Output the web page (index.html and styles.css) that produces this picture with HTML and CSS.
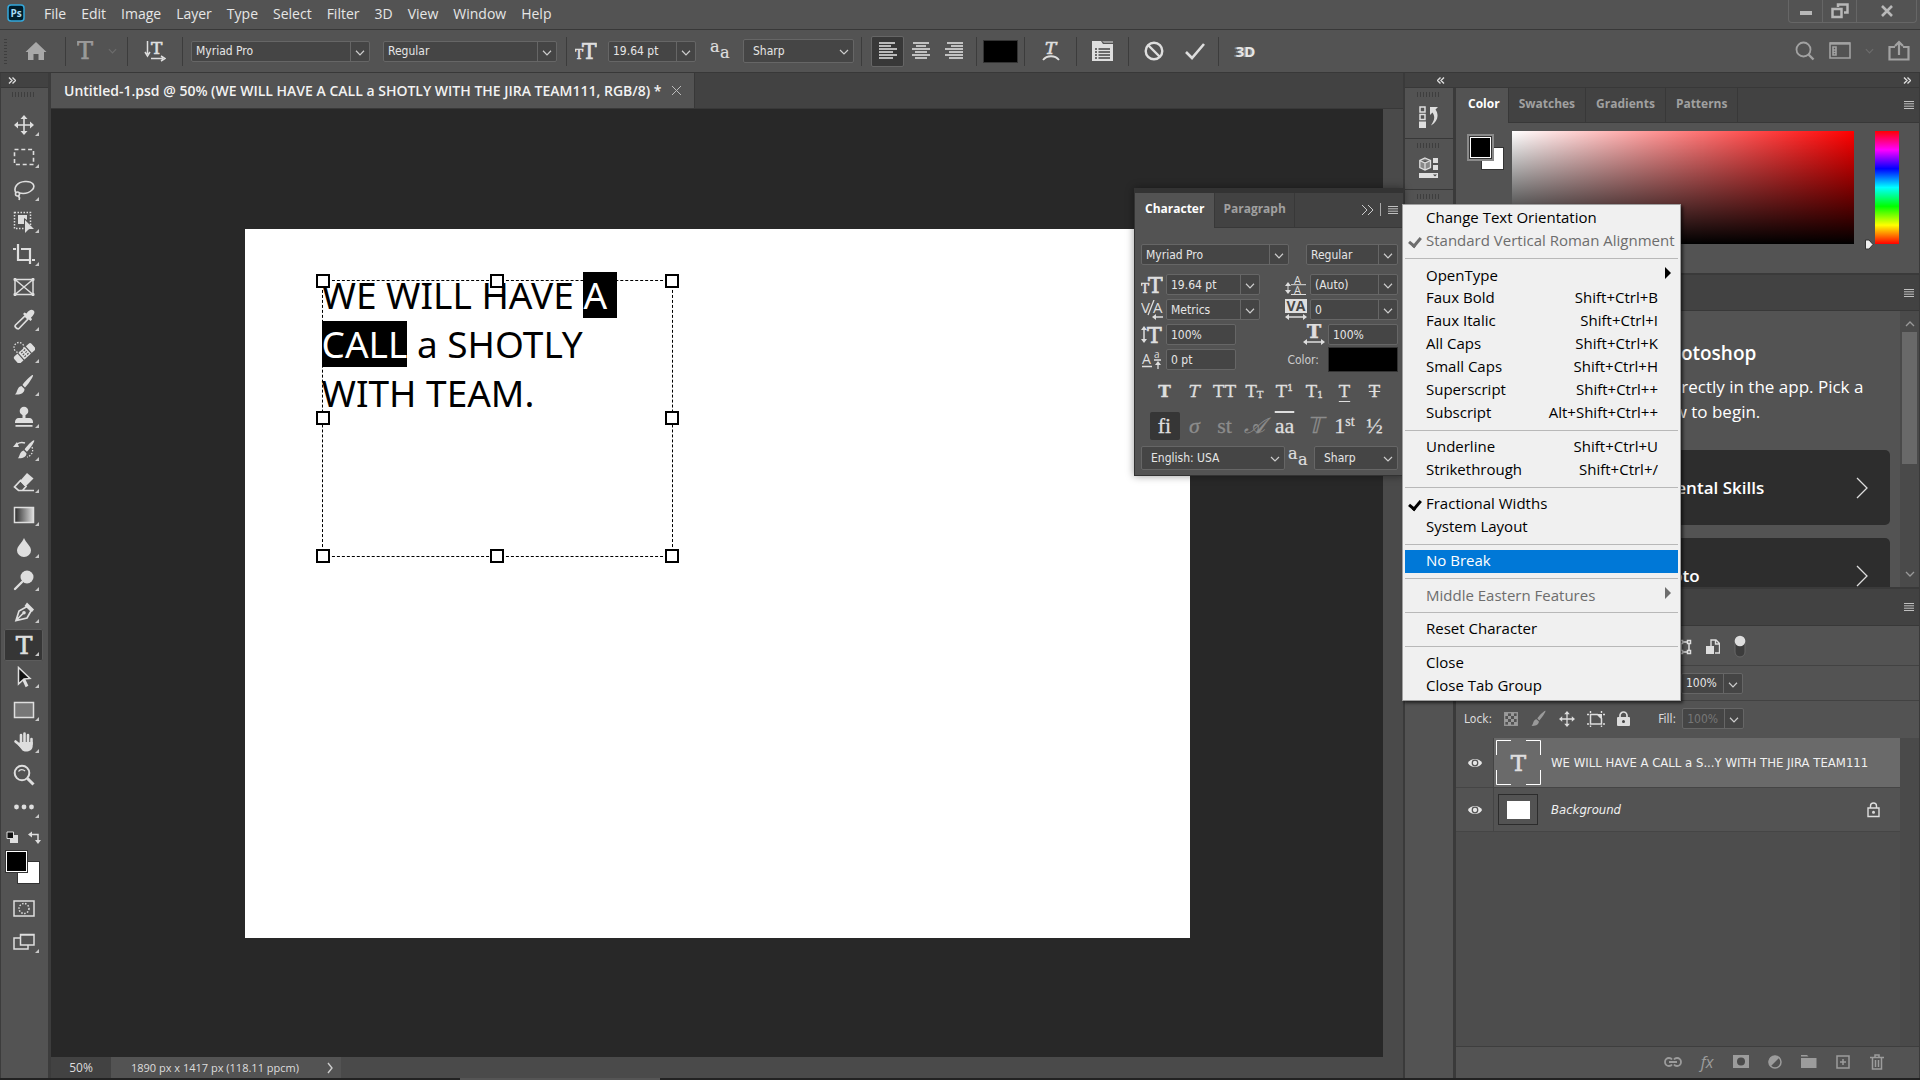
FILE: index.html
```html
<!DOCTYPE html>
<html lang="en">
<head>
    <meta charset="UTF-8">
    <meta name="viewport" content="width=device-width, initial-scale=1.0">
    <title>Untitled-1.psd</title>
    <link rel="stylesheet" href="styles.css">
</head>
<body>

    <!-- shared icons -->
    <svg class="sprite" aria-hidden="true">
        <symbol id="burger" viewBox="0 0 10 8"><path d="M0 .5h10M0 2.8h10M0 5.2h10M0 7.5h10" stroke="currentColor"/></symbol>
        <symbol id="chev" viewBox="0 0 10 6"><path d="M1 1l4 4 4-4" fill="none" stroke="currentColor" stroke-width="1.3"/></symbol>
        <symbol id="eye" viewBox="0 0 18 12"><path d="M1 6c3-6 13-6 16 0-3 6-13 6-16 0z" fill="currentColor"/><circle cx="9" cy="6" r="3.8" fill="#535353"/><circle cx="9" cy="6" r="2.4" fill="currentColor"/></symbol>
        <symbol id="brush" viewBox="0 0 22 22"><path d="M20 1c1 1-6 11-8 12.500l-2.500-2.500C11 8 19 0 20 1zM8.500 12l3 3c0 4-4 6-9.500 5.500 2.500-2 2-8 6.500-8.500z" fill="currentColor"/></symbol>
        <symbol id="move" viewBox="0 0 20 20"><path d="M10 2v16M2 10h16" stroke="currentColor" stroke-width="1.600"/><path d="M10 0l3.500 4h-7zM10 20l3.500-4h-7zM0 10l4-3.500v7zM20 10l-4-3.500v7z" fill="currentColor"/></symbol>
    </svg>

    <header class="menubar">
        <svg class="logo" viewBox="0 0 18 18"><rect x="1" y="1" width="16" height="16" rx="3" fill="#001d2b" stroke="#33a8dc" stroke-width="1.500"/><text x="9" y="13" text-anchor="middle" class="logo-text">Ps</text></svg>
        <nav class="menus">
            <a href="#">File</a><a href="#">Edit</a><a href="#">Image</a><a href="#">Layer</a><a href="#">Type</a><a href="#">Select</a><a href="#">Filter</a><a href="#">3D</a><a href="#">View</a><a href="#">Window</a><a href="#">Help</a>
        </nav>
        <div class="window-buttons">
            <button aria-label="Minimize"><svg width="14" height="12"><rect x="1" y="6" width="12" height="4" fill="#b8b8b8"/></svg></button>
            <button aria-label="Restore"><svg width="18" height="16" fill="none" stroke="#b8b8b8" stroke-width="2.500"><path d="M7 4V1.500h9.500v8H13"/><path d="M1.500 6h9v8h-9z"/></svg></button>
            <button class="wide" aria-label="Close"><svg width="14" height="12" stroke="#b8b8b8" stroke-width="2.600"><path d="M2 1l10 10M12 1L2 11"/></svg></button>
        </div>
    </header>

    <div class="options">
        <i class="grip-v"></i>
        <button class="opt home" aria-label="Home"><svg width="22" height="20" fill="#a8a8a8"><path d="M11 1l10.500 10H19v8h-5.500v-6h-5v6H3v-8H.5z"/></svg></button>
        <i class="sep"></i>
        <button class="opt preset" aria-label="Type tool preset"><svg width="18" height="20" class="glyph dim"><text x="0" y="18" font-size="24">T</text></svg><svg width="9" height="6" class="faint"><use href="#chev"/></svg></button>
        <i class="sep"></i>
        <button class="opt orient" aria-label="Text orientation"><svg width="22" height="22" class="glyph"><text x="7" y="14" font-size="17">T</text><path d="M3.500 1v13M1 12l2.500 4 2.500-4M7 18.500h12M17 16l4 2.500-4 2.500" fill="none" stroke="currentColor" stroke-width="1.500"/></svg></button>
        <i class="sep"></i>
        <select class="field opt-family" aria-label="Font family"><option>Myriad Pro</option></select>
        <select class="field opt-style" aria-label="Font style"><option>Regular</option></select>
        <i class="sep"></i>
        <label class="opt size" for="opt-size"><svg width="22" height="20" class="glyph"><text x="0" y="18" font-size="12">T</text><text x="7" y="18" font-size="22">T</text></svg></label>
        <select class="field opt-size" id="opt-size" aria-label="Font size"><option>19.64 pt</option></select>
        <label class="opt aa" for="opt-aa"><svg width="20" height="20" class="glyph thin"><text x="0" y="11" font-size="16">a</text><text x="10" y="17" font-size="16">a</text></svg></label>
        <select class="field plain opt-aa" id="opt-aa" aria-label="Anti-aliasing"><option>Sharp</option></select>
        <i class="sep"></i>
        <div class="aligns">
            <button class="active" aria-label="Align left"><svg width="18" height="18"><path d="M0 1h16M0 4h12M0 7h18M0 10h14M0 13h18M0 16h14" stroke="currentColor" stroke-width="1.500"/></svg></button>
            <button aria-label="Align center"><svg width="18" height="18"><path d="M1 1h16M4 4h10M0 7h18M3 10h12M0 13h18M3 16h12" stroke="currentColor" stroke-width="1.500"/></svg></button>
            <button aria-label="Align right"><svg width="18" height="18"><path d="M2 1h16M6 4h12M0 7h18M4 10h14M0 13h18M4 16h14" stroke="currentColor" stroke-width="1.500"/></svg></button>
        </div>
        <i class="sep"></i>
        <button class="swatch" aria-label="Text color"></button>
        <i class="sep"></i>
        <button class="opt b50" aria-label="Warp text"><svg width="18" height="22" class="glyph"><text x="3" y="14" font-size="17" font-style="italic">T</text><path d="M1 20c4-5 12-5 16 0" fill="none" stroke="currentColor" stroke-width="1.800"/></svg></button>
        <i class="sep"></i>
        <button class="opt b50" aria-label="Toggle panels"><svg width="22" height="22"><path d="M0 1h9l2 3h10v17H0z" fill="#dedede"/><path d="M10 1h11v2H12z" fill="#999"/><path d="M3 9h2M6.500 9H18M3 12h2M6.500 12H18M3 15h2M6.500 15H18M3 18h2M6.500 18H18" stroke="#444" stroke-width="1.300"/></svg></button>
        <i class="sep"></i>
        <div class="commit">
            <button aria-label="Cancel"><svg width="20" height="20" fill="none" stroke="#dedede" stroke-width="2.400"><circle cx="10" cy="10" r="8.300"/><path d="M4 4l12 12"/></svg></button>
            <button aria-label="Commit"><svg width="20" height="18" fill="none" stroke="#dedede" stroke-width="2.600"><path d="M1 10l6 6L19 2"/></svg></button>
        </div>
        <i class="sep"></i>
        <button class="opt three-d">3D</button>
        <div class="options-right">
            <button aria-label="Search"><svg width="20" height="20" fill="none" stroke="#a2a2a2" stroke-width="1.800"><circle cx="8.500" cy="8.500" r="7"/><path d="M13.500 13.500l5 5" stroke-width="2.400"/></svg></button>
            <button aria-label="Workspace"><svg width="22" height="18" fill="none" stroke="#a2a2a2" stroke-width="1.600"><path d="M1 1h20v15H1zM4 5h3v8H4zM4 8h3M4 10.500h3"/><path d="M1 1.500h20" stroke-width="2.400"/></svg></button>
            <svg width="9" height="6" class="faint"><use href="#chev"/></svg>
            <button aria-label="Share"><svg width="22" height="22" fill="none" stroke="#a2a2a2" stroke-width="2.200"><path d="M7 7H1.500v12.500h19V7H15M11 15V3M7 6l4-4 4 4"/></svg></button>
        </div>
    </div>

    <main class="workspace">
        <aside class="toolbar">
            <div class="strip"><svg width="8" height="7"><path d="M1 .5l3 3-3 3M4.500 .5l3 3-3 3"/></svg></div>
            <i class="grip"></i>
            <div class="tools">
                <button class="tool sub" aria-label="Move"><svg viewBox="0 0 22 22"><use href="#move" x="1" y="1" width="20" height="20"/></svg></button>
                <button class="tool sub" aria-label="Marquee"><svg viewBox="0 0 22 22"><rect x="1.500" y="3.500" width="19" height="15" fill="none" stroke="currentColor" stroke-width="1.600" stroke-dasharray="4 2.800"/></svg></button>
                <button class="tool sub" aria-label="Lasso"><svg viewBox="0 0 22 22" fill="none" stroke="currentColor" stroke-width="1.600"><path d="M3 14C0 9 4 3 12 2.500c8-.5 11 4.500 7 8.500-3 3-8 4-13 3"/><circle cx="4.500" cy="15" r="2"/><path d="M5 17c2 1 2 2 1 4"/></svg></button>
                <button class="tool sub" aria-label="Object selection"><svg viewBox="0 0 22 22"><rect x="1.500" y="1.500" width="16" height="16" fill="none" stroke="currentColor" stroke-width="1.500" stroke-dasharray="1.500 1.500"/><path d="M5 4h9v5l-3-2v6H5z" fill="currentColor"/><path d="M12 9l9 9h-5l-4 4z" fill="currentColor"/></svg></button>
                <button class="tool sub" aria-label="Crop"><svg viewBox="0 0 22 22" fill="none" stroke="currentColor" stroke-width="2.200"><path d="M0 5h3M5 0v16h12M8 5h9v15M19 16h3"/></svg></button>
                <button class="tool" aria-label="Frame"><svg viewBox="0 0 22 22" fill="none" stroke="currentColor" stroke-width="1.500"><path d="M2 3.500h18v15H2zM2 3.500l18 15M20 3.500l-18 15"/><path d="M1 2.500h2v2H1zM19 2.500h2v2h-2zM1 17.500h2v2H1zM19 17.500h2v2h-2z" fill="currentColor" stroke-width="1"/></svg></button>
                <button class="tool sub" aria-label="Eyedropper"><svg viewBox="0 0 22 22"><path d="M12 7l3 3L6 19.500c-1.500 1.500-5-2-3.500-3.500z" fill="none" stroke="currentColor" stroke-width="1.700"/><path d="M10 5l1.500-1.500 2 1C16 1 18.500 0 20.500 1.500S21 6 18 8.500l1 2L17.500 12z" fill="currentColor"/></svg></button>
                <button class="tool sub" aria-label="Healing brush"><svg viewBox="0 0 22 22"><circle cx="6" cy="6.500" r="5" fill="none" stroke="currentColor" stroke-width="1.300" stroke-dasharray="1.500 1.500"/><g transform="rotate(-42 12 12)"><rect x="0" y="7.500" width="23" height="9" rx="2" fill="currentColor"/><path d="M6.500 7v10M16.500 7v10M9 9.500h2M12.500 9.500h2M9 12h2M12.500 12h2M9 14.500h2M12.500 14.500h2" stroke="#535353" stroke-width="1.200"/></g></svg></button>
                <button class="tool sub" aria-label="Brush"><svg viewBox="0 0 22 22"><use href="#brush" width="22" height="22"/></svg></button>
                <button class="tool sub" aria-label="Clone stamp"><svg viewBox="0 0 22 22" fill="currentColor"><circle cx="11" cy="5" r="4.300"/><path d="M9.500 8h3v4h4c2 0 3.500 2 3.500 4v1H2v-1c0-2 1.500-4 3.500-4h4zM2.500 19h17v1.800h-17z"/></svg></button>
                <button class="tool sub" aria-label="History brush"><svg viewBox="0 0 22 22"><use href="#brush" x="3" width="20" height="21"/><path d="M0 8l4-5 2 5z" fill="currentColor"/><path d="M4 5c3-2 5-2 8-1" fill="none" stroke="currentColor" stroke-width="1.500"/><path d="M19 8c2 5-1 9-5 10" fill="none" stroke="currentColor" stroke-width="1.300" stroke-dasharray="1.500 1.500"/></svg></button>
                <button class="tool sub" aria-label="Eraser"><svg viewBox="0 0 22 22"><path d="M7 10l7-8 6.500 5.500-8 8z" fill="currentColor"/><path d="M7.500 9.500l5.500 6-3.500 4h-4L1.500 16zM9 19.500h12" fill="none" stroke="currentColor" stroke-width="1.700"/></svg></button>
                <button class="tool sub" aria-label="Gradient"><svg viewBox="0 0 22 22"><defs><linearGradient id="gr"><stop offset="0" stop-color="#2a2a2a"/><stop offset="1" stop-color="#ddd"/></linearGradient></defs><rect x="1.500" y="3.500" width="19" height="15" fill="url(#gr)" stroke="#dedede" stroke-width="1.500"/></svg></button>
                <button class="tool sub" aria-label="Blur"><svg viewBox="0 0 22 22"><path d="M11 2c2 5 7 8 7 12.500a7 6.500 0 0 1-14 0C4 10 9 7 11 2z" fill="currentColor"/></svg></button>
                <button class="tool sub" aria-label="Dodge"><svg viewBox="0 0 22 22"><circle cx="14" cy="8" r="6.500" fill="currentColor"/><path d="M9 13l-7 7" stroke="currentColor" stroke-width="2.400" stroke-linecap="round"/></svg></button>
                <button class="tool sub" aria-label="Pen"><svg viewBox="0 0 22 22"><path d="M3 19.500L6 10l8-4.500L18 10l-4 7zM3 19.500l7-7" fill="none" stroke="currentColor" stroke-width="1.700"/><circle cx="11" cy="11.800" r="1.800" fill="currentColor"/><path d="M14 1.500l7 7-2 2.500-7.500-6z" fill="currentColor"/></svg></button>
                <button class="tool sub active" aria-label="Type"><svg viewBox="0 0 22 22" class="glyph"><text x="11" y="20" font-size="25" text-anchor="middle">T</text></svg></button>
                <button class="tool sub" aria-label="Path selection"><svg viewBox="0 0 22 22"><path d="M10.500 13l3.500 7.500" stroke="#dedede" stroke-width="3"/><path d="M5.500 1.500l11.500 11-6 .5-5.500 5z" fill="#111" stroke="#dedede" stroke-width="1.500"/></svg></button>
                <button class="tool sub" aria-label="Rectangle"><svg viewBox="0 0 22 22"><rect x="1.500" y="3.500" width="19" height="15" fill="#777" stroke="#dedede" stroke-width="1.500"/></svg></button>
                <button class="tool sub" aria-label="Hand"><svg viewBox="0 0 22 22" fill="none" stroke="currentColor" stroke-linecap="round"><path d="M8 12V4M11.500 11V2.500M15 12V4M18.500 13V8M8 15l-5.500-4.500" stroke-width="2.600"/><path d="M7 11h12.700v4c0 6-9 7-11 3.500L5 14z" fill="currentColor" stroke="none"/></svg></button>
                <button class="tool" aria-label="Zoom"><svg viewBox="0 0 22 22" fill="none" stroke="currentColor"><circle cx="9" cy="9" r="7.300" stroke-width="2"/><path d="M5.500 7.500c1.500-2.500 4.500-2.500 6.500-.5" stroke-width="1.300"/><path d="M14.500 14.500l6 6" stroke-width="3"/></svg></button>
                <button class="tool sub" aria-label="Edit toolbar"><svg viewBox="0 0 22 22" fill="currentColor"><circle cx="3.500" cy="11" r="2.400"/><circle cx="11" cy="11" r="2.400"/><circle cx="18.500" cy="11" r="2.400"/></svg></button>
            </div>
            <div class="mini">
                <button aria-label="Default colors"><svg width="13" height="13"><path d="M4 4h8v8H4z" fill="#dedede"/><path d="M1 1h6.500v6.500H1z" fill="#111" stroke="#dedede"/></svg></button>
                <button aria-label="Switch colors"><svg width="13" height="13" fill="none" stroke="#dedede" stroke-width="1.500"><path d="M3 3.500h7V11"/><path d="M4 .5v6l-4-3zM7 9h6l-3 4z" fill="#dedede" stroke="none"/></svg></button>
            </div>
            <div class="fg-bg"><button class="fg" aria-label="Foreground"></button><button class="bg" aria-label="Background"></button></div>
            <button class="tool" aria-label="Quick mask"><svg viewBox="0 0 22 22" fill="none" stroke="currentColor"><rect x="1" y="3" width="20" height="15" stroke-width="1.500"/><circle cx="11" cy="10.500" r="5" stroke-width="1.500" stroke-dasharray="1.500 1.500"/></svg></button>
            <button class="tool sub" aria-label="Screen mode"><svg viewBox="0 0 22 22" fill="none" stroke="currentColor" stroke-width="1.500"><path d="M7 7H1v11h14v-4M7.500 3.500H21V14H7.500zM7.500 4H21"/></svg></button>
        </aside>

        <section class="document">
            <div class="doc-tabs">
                <div class="doc-tab">Untitled-1.psd @ 50% (WE WILL HAVE A CALL a SHOTLY WITH THE JIRA TEAM111, RGB/8) *
                    <button aria-label="Close document"><svg width="9" height="9" stroke="#bbb"><path d="M0 0l9 9M9 0L0 9"/></svg></button></div>
            </div>
            <div class="stage">
                <div class="canvas">
                    <div class="artboard">
                        <p class="copy">WE WILL HAVE <mark>A </mark><br><mark>CALL</mark> a SHOTLY<br>WITH TEAM.</p>
                        <div class="frame"><i></i><i></i><i></i><i></i><i></i><i></i><i></i><i></i></div>
                    </div>
                </div>
                <div class="v-scroll"></div>
            </div>
            <footer class="status">
                <span class="zoom">50%</span>
                <span class="dims">1890 px x 1417 px (118.11 ppcm)</span>
                <button aria-label="Status options"><svg width="6" height="12" fill="none" stroke="#ccc" stroke-width="1.400"><path d="M1 1l4 5-4 5"/></svg></button>
            </footer>
        </section>

        <aside class="dock">
            <div class="strip"><svg width="8" height="7"><path d="M3.500 .5l-3 3 3 3M7 .5l-3 3 3 3"/></svg></div>
            <div class="dock-item"><i class="grip"></i><button aria-label="History"><svg width="20" height="22"><path d="M1 1h5v5H1zM1 8.500h5v5H1z" fill="none" stroke="#dedede" stroke-width="1.500"/><path d="M0 15.500h7V22H0z" fill="#dedede"/><path d="M11 1h8l-2.500 2.500c4 6 2 12-4.500 16 4-6 4-9 1.500-13L11 9z" fill="#dedede"/></svg></button></div>
            <div class="dock-item"><i class="grip"></i><button aria-label="Libraries"><svg width="20" height="22"><path d="M6 1l5.500 2.500v7L6 13 .8 10.500v-7zM.8 3.500L6 6l5.500-2.500M6 6v7" fill="#888" stroke="#dedede" stroke-width="1.300"/><path d="M14 1h5v5h-5zM14 8h5v5h-5zM0 16h19v5H0z" fill="#dedede"/><path d="M14 17.500h4l-2 2z" fill="#444"/></svg></button></div>
            <div class="dock-item rest"><i class="grip"></i></div>
        </aside>

        <aside class="panels">
            <div class="strip"><svg width="8" height="7"><path d="M1 .5l3 3-3 3M4.500 .5l3 3-3 3"/></svg></div>

            <section class="panel color">
                <div class="tabs"><button class="on">Color</button><button>Swatches</button><button>Gradients</button><button>Patterns</button><span class="panel-menu"><svg width="10" height="8"><use href="#burger"/></svg></span></div>
                <div class="picker">
                    <div class="fg-bg"><button class="fg" aria-label="Foreground"></button><button class="bg" aria-label="Background"></button></div>
                    <div class="field-2d"></div>
                    <div class="hue"><svg width="10" height="11"><path d="M1.500 1H5l4 4.500L5 10H1.500z" fill="#eee" stroke="#333"/></svg></div>
                </div>
            </section>

            <section class="panel learn">
                <div class="tabs"><span class="panel-menu"><svg width="10" height="8"><use href="#burger"/></svg></span></div>
                <div class="learn-body">
                    <div class="learn-content">
                        <h2>Learn Photoshop</h2>
                        <p>Step-by-step tutorials directly in the app. Pick a topic below to begin.</p>
                        <a class="card" href="#"><span>Fundamental Skills</span><svg width="13" height="22"><path d="M1 1l10 10L1 21" fill="none" stroke="#ddd" stroke-width="1.300"/></svg></a>
                        <a class="card" href="#"><span>Fix a photo</span><svg width="13" height="22"><path d="M1 1l10 10L1 21" fill="none" stroke="#ddd" stroke-width="1.300"/></svg></a>
                    </div>
                    <div class="scroller"><svg class="up" width="10" height="6"><use href="#chev"/></svg><i></i><svg class="down" width="10" height="6"><use href="#chev"/></svg></div>
                </div>
            </section>

            <section class="panel layers">
                <div class="tabs"><span class="panel-menu"><svg width="10" height="8"><use href="#burger"/></svg></span></div>
                <div class="row filters">
                    <svg width="14" height="16" fill="none" stroke="#dedede" stroke-width="1.500"><path d="M3 3h8v10H3z"/><path d="M1.500 1.500h3v3h-3zM9.500 1.500h3v3h-3zM1.500 11.500h3v3h-3zM9.500 11.500h3v3h-3z" fill="#535353"/></svg>
                    <svg width="14" height="16"><path d="M5 9V1h5l3.500 3.500V14H9M9.500 1v4h4" fill="none" stroke="#dedede" stroke-width="1.400"/><path d="M0 7h8v8H0z" fill="#dedede"/></svg>
                    <svg width="12" height="23"><rect x="1" y="2" width="10" height="20" rx="5" fill="#3c3c3c" stroke="#666"/><circle cx="6" cy="6" r="5.300" fill="#dedede"/></svg>
                </div>
                <div class="row opacity"><select class="field" aria-label="Opacity"><option>100%</option></select></div>
                <div class="row locks">
                    <span>Lock:</span>
                    <button class="dim" aria-label="Lock transparent pixels"><svg width="14" height="14"><rect x=".7" y=".7" width="12.600" height="12.600" fill="none" stroke="currentColor" stroke-width="1.300"/><path d="M1 1h3v3H1zM7 1h3v3H7zM4 4h3v3H4zM10 4h3v3h-3zM1 7h3v3H1zM7 7h3v3H7zM4 10h3v3H4zM10 10h3v3h-3z" fill="currentColor"/></svg></button>
                    <button class="dim" aria-label="Lock image pixels"><svg width="17" height="17"><use href="#brush"/></svg></button>
                    <button aria-label="Lock position"><svg width="16" height="16"><use href="#move"/></svg></button>
                    <button aria-label="Lock artboard"><svg width="18" height="16"><path d="M3.500 3.500h7l4 4V13h-11z" fill="none" stroke="currentColor" stroke-width="1.500"/><path d="M10 3h5v5z" fill="currentColor"/><path d="M0 3.500h2M3.500 0v2M16 3.500h2M14.500 0v2M0 13h2M3.500 14.500V16M16 13h2M14.500 14.500V16" stroke="currentColor" stroke-width="1.400"/></svg></button>
                    <button aria-label="Lock all"><svg width="13" height="16"><path d="M3 7V4.500a3.500 3.500 0 0 1 7 0V7" fill="none" stroke="currentColor" stroke-width="1.700"/><rect y="6" width="13" height="9" rx="1" fill="currentColor"/><circle cx="6.500" cy="10.500" r="1.500" fill="#444"/></svg></button>
                    <label class="fill-label" for="fill">Fill:</label>
                    <select class="field" id="fill" disabled><option>100%</option></select>
                </div>
                <div class="layer-list">
                    <div class="layer selected">
                        <button class="vis" aria-label="Toggle visibility"><svg width="16" height="12"><use href="#eye"/></svg></button>
                        <div class="layer-main"><svg class="glyph" width="45" height="45"><path d="M.5 15V.5H15M30 .5h14.500V15M44.500 30v14.500H30M15 44.500H.5V30" fill="none" stroke="#fff"/><text x="22.500" y="31" font-size="23" text-anchor="middle">T</text></svg><span>WE WILL HAVE A CALL a S...Y WITH THE JIRA TEAM111</span></div>
                    </div>
                    <div class="layer">
                        <button class="vis" aria-label="Toggle visibility"><svg width="16" height="12"><use href="#eye"/></svg></button>
                        <div class="layer-main"><i class="thumb"></i><em>Background</em><svg class="lock" width="13" height="16" fill="none" stroke="#dedede" stroke-width="1.400"><path d="M3.500 6V4a3 3 0 0 1 6 0v2M1 6h11v8.500H1z"/><circle cx="6.500" cy="10.300" r=".8"/></svg></div>
                    </div>
                </div>
                <footer class="layer-actions">
                    <button aria-label="Link layers"><svg width="18" height="10" fill="none" stroke="currentColor" stroke-width="1.800"><path d="M8 2.500C7 1 6 1 5 1a4 4 0 0 0 0 8c1 0 2 0 3-1.500M10 2.500C11 1 12 1 13 1a4 4 0 0 1 0 8c-1 0-2 0-3-1.500M5 5h8"/></svg></button>
                    <button class="fx" aria-label="Layer style">fx</button>
                    <button aria-label="Layer mask"><svg width="16" height="13"><path d="M0 0h16v13H0z" fill="currentColor"/><circle cx="8" cy="6.500" r="4" fill="#4c4c4c"/></svg></button>
                    <button aria-label="Adjustment layer"><svg width="14" height="14"><circle cx="7" cy="7" r="6" fill="none" stroke="currentColor" stroke-width="1.500"/><path d="M11.500 2.500a6 6 0 0 0-9 9z" fill="currentColor"/></svg></button>
                    <button aria-label="New group"><svg width="16" height="13" fill="currentColor"><path d="M0 0h6l1.500 1.500H0zM0 3h15.500v10H0z"/></svg></button>
                    <button aria-label="New layer"><svg width="14" height="14" fill="none" stroke="currentColor" stroke-width="1.500"><path d="M1 1h12v12H1zM7 4v6M4 7h6"/></svg></button>
                    <button aria-label="Delete layer"><svg width="14" height="16" fill="none" stroke="currentColor" stroke-width="1.500"><path d="M0 3.500h14M5 3V1h4v2M2.500 4v11h9V4M5.500 6v7M8.500 6v7"/></svg></button>
                </footer>
            </section>
        </aside>

        <section class="character">
            <div class="tabs"><button class="on">Character</button><button>Paragraph</button><span class="panel-menu"><svg width="12" height="10" fill="none" stroke="#ccc"><path d="M1 0l5 5-5 5M7 0l5 5-5 5"/></svg><i></i><svg width="10" height="8"><use href="#burger"/></svg></span></div>
            <div class="char-body">
                <div class="char-row">
                    <select class="field w148" aria-label="Font family"><option>Myriad Pro</option></select>
                    <select class="field w92 end" aria-label="Font style"><option>Regular</option></select>
                </div>
                <div class="char-row">
                    <label for="c-size"><svg width="22" height="20" class="glyph"><text x="0" y="18" font-size="12">T</text><text x="7" y="18" font-size="22">T</text></svg></label>
                    <select class="field w94" id="c-size"><option>19.64 pt</option></select>
                    <label class="end" for="c-lead"><svg width="22" height="20" class="glyph sans"><text x="9" y="9" font-size="11">A</text><text x="9" y="19" font-size="11">A</text><path d="M6 9.700h15M6 19.500h15M3 9v8" stroke="currentColor"/><path d="M0 11l3-4 3 4zM0 15l3 4 3-4z"/></svg></label>
                    <select class="field w88" id="c-lead"><option>(Auto)</option></select>
                </div>
                <div class="char-row">
                    <label for="c-kern"><svg width="22" height="20" class="glyph sans"><text x="0" y="13" font-size="15">V</text><text x="12" y="13" font-size="15">A</text><path d="M7 15l6-15M14 17h8" stroke="currentColor" stroke-width="1.300"/><path d="M11 17l4-3v6z"/></svg></label>
                    <select class="field w94" id="c-kern"><option>Metrics</option></select>
                    <label class="end" for="c-track"><svg width="22" height="21" class="glyph sans"><path d="M0 0h22v14H0z"/><text x="11" y="12" font-size="14" font-weight="bold" text-anchor="middle" class="dark">VA</text><path d="M2 18h18" stroke="currentColor" stroke-width="1.500"/><path d="M0 18l4-3v6zM22 18l-4-3v6z"/></svg></label>
                    <select class="field w88" id="c-track"><option>0</option></select>
                </div>
                <div class="char-row">
                    <label for="c-vs"><svg width="22" height="20" class="glyph"><text x="6" y="18" font-size="22">T</text><path d="M3 4v12" stroke="currentColor" stroke-width="1.500"/><path d="M0 5l3-4 3 4zM0 14l3 4 3-4z"/></svg></label>
                    <input class="field w70" id="c-vs" value="100%">
                    <label class="end" for="c-hs"><svg width="22" height="21" class="glyph"><text x="11" y="14" font-size="19" font-weight="bold" text-anchor="middle">T</text><path d="M2 18h18" stroke="currentColor" stroke-width="1.500"/><path d="M0 18l4-3v6zM22 18l-4-3v6z"/></svg></label>
                    <input class="field w70" id="c-hs" value="100%">
                </div>
                <div class="char-row">
                    <label for="c-base"><svg width="22" height="20" class="glyph sans"><text x="1" y="14" font-size="14">A</text><text x="13" y="8" font-size="10">a</text><path d="M1 16.500h10M13 10h7M17 13v6" stroke="currentColor" stroke-width="1.300"/><path d="M14 15l3-4 3 4z"/></svg></label>
                    <input class="field w70" id="c-base" value="0 pt">
                    <span class="end color-label">Color:</span>
                    <button class="swatch" aria-label="Color"></button>
                </div>
                <div class="faces">
                    <button class="b">T</button><button class="i">T</button><button>TT</button><button>T<small>T</small></button><button>T<sup>1</sup></button><button>T<sub>1</sub></button><button class="u">T</button><button class="s">T</button>
                </div>
                <div class="faces opentype">
                    <button class="active">fi</button><button class="dim i">&#963;</button><button class="dim">st</button><button class="dim i">&#119964;</button><button class="over">aa</button><button class="dim i">&#120139;</button><button>1<sup>st</sup></button><button>&#189;</button>
                </div>
                <div class="char-row last">
                    <select class="field plain w144" aria-label="Language"><option>English: USA</option></select>
                    <label for="c-aa"><svg width="20" height="20" class="glyph thin"><text x="0" y="11" font-size="16">a</text><text x="10" y="17" font-size="16">a</text></svg></label>
                    <select class="field plain w84 end" id="c-aa"><option>Sharp</option></select>
                </div>
            </div>
        </section>

        <ul class="flyout">
            <li>Change Text Orientation</li>
            <li class="checked off">Standard Vertical Roman Alignment</li>
            <li class="line"></li>
            <li class="more">OpenType</li>
            <li>Faux Bold<kbd>Shift+Ctrl+B</kbd></li>
            <li>Faux Italic<kbd>Shift+Ctrl+I</kbd></li>
            <li>All Caps<kbd>Shift+Ctrl+K</kbd></li>
            <li>Small Caps<kbd>Shift+Ctrl+H</kbd></li>
            <li>Superscript<kbd>Shift+Ctrl++</kbd></li>
            <li>Subscript<kbd>Alt+Shift+Ctrl++</kbd></li>
            <li class="line"></li>
            <li>Underline<kbd>Shift+Ctrl+U</kbd></li>
            <li>Strikethrough<kbd>Shift+Ctrl+/</kbd></li>
            <li class="line"></li>
            <li class="checked">Fractional Widths</li>
            <li>System Layout</li>
            <li class="line"></li>
            <li class="hover">No Break</li>
            <li class="line"></li>
            <li class="more off">Middle Eastern Features</li>
            <li class="line"></li>
            <li>Reset Character</li>
            <li class="line"></li>
            <li>Close</li>
            <li>Close Tab Group</li>
        </ul>
    </main>
    <div class="taskbar-edge"></div>

</body>
</html>
```
FILE: styles.css
```css
* {
    box-sizing: border-box;
}
body {
    margin: 0;
    height: 100vh;
    display: flex;
    flex-direction: column;
    overflow: hidden;
    background: #535353;
    color: #e6e6e6;
    font-family: "Open Sans", "Noto Sans", sans-serif;
    font-size: 12px;
}
button {
    background: none;
    border: 0;
    padding: 0;
    margin: 0;
    color: inherit;
    font: inherit;
    display: flex;
    align-items: center;
    justify-content: center;
}
a {
    color: inherit;
    text-decoration: none;
}
svg {
    display: block;
    flex: none;
}
.sprite {
    display: none;
}
.glyph {
    color: #dedede;
    fill: currentColor;
    font-family: "DejaVu Serif", serif;
}
.glyph text {
    stroke: currentColor;
    stroke-width: .7px;
}
.glyph.thin text {
    stroke-width: .2px;
}
.glyph.sans {
    font-family: "Open Sans", sans-serif;
}
.glyph.sans text {
    stroke: none;
}
.glyph .dark {
    fill: #444;
}
.glyph.dim, .dim {
    color: #9a9a9a;
}
.faint {
    color: #6c6c6c;
}

/* menu bar */
.menubar {
    flex: none;
    height: 30px;
    display: flex;
    border-bottom: 1px solid #383838;
}
.logo {
    width: 18px;
    height: 18px;
    margin: 4px 0 0 7px;
}
.logo-text {
    font-size: 10px;
    font-weight: bold;
    fill: #a8dcf5;
}
.menus {
    display: flex;
    gap: 15px;
    margin-left: 19px;
    font-size: 14px;
    line-height: 28px;
}
.window-buttons {
    display: flex;
    margin-left: auto;
    margin-right: 3px;
    height: 23px;
    border: 1px solid #666;
    border-top: 0;
    border-radius: 0 0 4px 4px;
}
.window-buttons button {
    width: 34px;
    border-right: 1px solid #666;
}
.window-buttons .wide {
    width: 59px;
    border: 0;
}

/* options bar */
.options {
    flex: none;
    height: 43px;
    display: flex;
    align-items: center;
    border-bottom: 1px solid #383838;
}
.options .sep {
    width: 1px;
    height: 29px;
    background: #3c3c3c;
}
.grip-v {
    width: 3px;
    height: 25px;
    margin-left: 4px;
    background: repeating-linear-gradient(#3e3e3e 0 1px, transparent 1px 3px);
}
.opt {
    display: flex;
    justify-content: center;
    align-items: center;
}
.home {
    width: 58px;
}
.preset {
    width: 61px;
    gap: 13px;
}
.orient {
    width: 54px;
}
.field {
    height: 21px;
    padding: 0 4px;
    border: 1px solid #666;
    border-radius: 2px;
    background: #454545;
    color: #e6e6e6;
    font-family: "DejaVu Sans Condensed", "Noto Sans", sans-serif;
    font-size: 12px;
    appearance: none;
    outline: 0;
    min-width: 0;
}
select.field {
    background: #454545 url("data:image/svg+xml,%3Csvg xmlns='http://www.w3.org/2000/svg' width='19' height='20'%3E%3Cpath d='M.5 0v20' stroke='%23666'/%3E%3Cpath d='M6 9l4 4 4-4' fill='none' stroke='%23ccc' stroke-width='1.2'/%3E%3C/svg%3E") right center no-repeat;
}
select.field.plain {
    height: 24px;
    padding-left: 9px;
    background-image: url("data:image/svg+xml,%3Csvg xmlns='http://www.w3.org/2000/svg' width='19' height='20'%3E%3Cpath d='M6 9l4 4 4-4' fill='none' stroke='%23ccc' stroke-width='1.2'/%3E%3C/svg%3E");
}
.field:disabled {
    color: #777;
    opacity: 1;
}
.opt-family {
    width: 179px;
    margin: 0 13px 0 8px;
}
.opt-style {
    width: 174px;
    margin-right: 9px;
}
label.size {
    width: 41px;
    padding-right: 4px;
}
.opt-size {
    width: 88px;
}
label.aa {
    width: 47px;
}
.opt-aa {
    width: 111px;
    margin-right: 7px;
}
.aligns {
    display: flex;
    padding: 0 6px 0 9px;
}
.aligns button {
    width: 33px;
    height: 31px;
    border-radius: 2px;
}
.aligns .active {
    background: #383838;
    border: 1px solid #666;
}
.swatch {
    width: 35px;
    height: 23px;
    margin: 0 6px;
    background: #000;
    border: 1px solid #333;
}
.b50 {
    width: 51px;
}
.commit {
    display: flex;
    gap: 21px;
    padding: 0 13px 0 15px;
}
.three-d {
    width: 53px;
    font-size: 15px;
    font-weight: bold;
    text-shadow: -2px 0 #8a8a8a;
}
.options-right {
    margin-left: auto;
    margin-right: 10px;
    display: flex;
    align-items: center;
    gap: 14px;
}

/* work area */
.workspace {
    position: relative;
    flex: 1;
    min-height: 0;
    display: grid;
    grid-template-columns: 51px 1fr 53px 464px;
}
.strip {
    flex: none;
    display: flex;
    align-items: center;
    height: 15px;
    background: #424242;
    border-bottom: 1px solid #383838;
}
.strip svg {
    fill: none;
    stroke: #ddd;
    stroke-width: 1.4px;
}
.grip {
    display: block;
    width: 24px;
    height: 5px;
    background: repeating-linear-gradient(90deg, #3e3e3e 0 1px, transparent 1px 3px);
}
.toolbar {
    display: flex;
    flex-direction: column;
    border-right: 3px solid #3c3c3c;
    border-left: 1px solid #3c3c3c;
}
.toolbar .strip {
    padding-left: 7px;
}
.toolbar .grip {
    margin: 4px 0 12px 11px;
}
.tools {
    margin-bottom: 3px;
}
.tool {
    position: relative;
    width: 39px;
    height: 32px;
    margin-left: 3px;
    color: #dedede;
}
.tool:nth-child(even) {
    margin-bottom: 1px;
}
.tool svg {
    width: 22px;
    height: 22px;
}
.tool.active {
    background: #363636;
    border-radius: 2px;
    box-shadow: inset 0 0 0 1px #5c5c5c;
}
.tool.sub::after {
    content: "";
    position: absolute;
    right: 4px;
    bottom: 5px;
    border: 2px solid;
    border-color: transparent #c8c8c8 #c8c8c8 transparent;
}
.mini {
    display: flex;
    gap: 9px;
    padding: 4px 0 6px 5px;
}
.fg-bg {
    display: flex;
    align-items: flex-start;
}
.fg, .bg {
    width: 23px;
    height: 23px;
    border: 1px solid #333;
    background: #fff;
}
.fg {
    z-index: 1;
    background: #000;
    box-shadow: inset 0 0 0 1px #fff;
}
.bg {
    margin: 11px 0 0 -11px;
}
.toolbar .fg-bg {
    margin: 0 0 9px 4px;
}

/* document */
.document {
    display: flex;
    flex-direction: column;
    min-width: 0;
}
.doc-tabs {
    flex: none;
    display: flex;
    height: 36px;
    background: #424242;
    border-bottom: 1px solid #383838;
}
.doc-tab {
    display: flex;
    align-items: center;
    gap: 10px;
    padding: 0 13px;
    background: #535353;
    border-right: 1px solid #383838;
    color: #f2f2f2;
    font-size: 14px;
    font-weight: 600;
    white-space: nowrap;
}
.stage {
    flex: 1;
    min-height: 0;
    display: flex;
}
.canvas {
    flex: 1;
    display: flex;
    align-items: center;
    justify-content: center;
    background: #282828;
}
.v-scroll {
    width: 20px;
    background: #4a4a4a;
}
.artboard {
    position: relative;
    width: 945px;
    height: 709px;
    background: #fff;
    color: #000;
}
.copy {
    position: absolute;
    left: 77px;
    top: 41px;
    margin: 0;
    font-family: "Noto Sans", sans-serif;
    font-size: 37px;
    line-height: 49px;
    white-space: pre;
}
.copy mark {
    display: inline-block;
    background: #000;
    color: #fff;
    line-height: 46px;
}
.frame {
    position: absolute;
    left: 77px;
    top: 51px;
    width: 351px;
    height: 277px;
    border: 1px dashed #000;
}
.frame i {
    position: absolute;
    width: 14px;
    height: 14px;
    margin: -7px;
    border: 2px solid #000;
    background: #fff;
}
.frame i:nth-child(-n+3) { top: 0; }
.frame i:nth-child(4), .frame i:nth-child(5) { top: 50%; }
.frame i:nth-child(n+6) { top: 100%; }
.frame i:nth-child(1), .frame i:nth-child(4), .frame i:nth-child(6) { left: 0; }
.frame i:nth-child(2), .frame i:nth-child(7) { left: 50%; }
.frame i:nth-child(3), .frame i:nth-child(5), .frame i:nth-child(8) { left: 100%; }
.status {
    flex: none;
    display: flex;
    align-items: center;
    height: 21px;
    background: #4a4a4a;
    color: #ddd;
    font-size: 12px;
}
.status .zoom {
    width: 60px;
    line-height: 21px;
    text-align: center;
    background: #424242;
}
.status .dims {
    padding: 0 20px;
    font-size: 11px;
    line-height: 21px;
    background: #535353;
}
.status button {
    width: 22px;
    height: 21px;
    background: #535353;
}

/* icon dock */
.dock {
    display: flex;
    flex-direction: column;
    border-left: 2px solid #3a3a3a;
}
.dock .strip {
    padding-left: 32px;
}
.dock-item {
    height: 51px;
    border-right: 3px solid #3a3a3a;
    border-bottom: 1px solid #383838;
}
.dock-item.rest {
    flex: 1;
    border-bottom: 0;
}
.dock-item .grip {
    margin: 4px 0 9px 12px;
}
.dock-item button {
    margin-left: 14px;
}

/* panels */
.panels {
    display: flex;
    flex-direction: column;
    min-width: 0;
    border-right: 1px solid #3a3a3a;
}
.panels .strip {
    justify-content: flex-end;
    padding-right: 8px;
}
.tabs {
    flex: none;
    display: flex;
    height: 35px;
    background: #424242;
    border-bottom: 1px solid #383838;
    font-weight: bold;
}
.tabs button {
    padding: 0 10px 4px;
    border-right: 1px solid #383838;
    color: #a0a0a0;
}
.tabs .on {
    height: 35px;
    background: #535353;
    color: #fff;
}
.panels .tabs .on {
    padding-left: 12px;
    padding-right: 8px;
}
.panel-menu {
    display: flex;
    align-items: center;
    gap: 7px;
    margin-left: auto;
    padding-right: 5px;
    color: #c0c0c0;
}
.panel-menu i {
    width: 1px;
    height: 13px;
    background: #aaa;
}
.picker {
    display: flex;
    align-items: flex-start;
    height: 150px;
    padding: 8px 20px 0 13px;
}
.picker .fg {
    box-shadow: inset 0 0 0 1px #fff, 0 0 0 2px #8a8a8a;
}
.picker .fg-bg {
    margin: 5px 8px 0 0;
}
.field-2d {
    flex: 1;
    height: 113px;
    margin-right: 21px;
    background: linear-gradient(transparent, #000), linear-gradient(90deg, #fff, #f00);
}
.hue {
    position: relative;
    width: 24px;
    height: 113px;
    background: linear-gradient(#f00, #f0f, #00f, #0ff, #0f0, #ff0, #f00);
}
.hue svg {
    position: absolute;
    left: -11px;
    bottom: -6px;
}
.learn {
    border-top: 2px solid #3a3a3a;
}
.learn .tabs {
    height: 36px;
}
.learn-body {
    display: flex;
    height: 276px;
    overflow: hidden;
}
.learn-content {
    flex: 1;
    padding: 27px 10px 0;
    color: #fff;
}
.learn h2 {
    margin: 0;
    font-size: 19px;
    font-weight: 600;
    line-height: 30px;
    text-align: center;
}
.learn p {
    margin: 6px 0 26px;
    padding: 0 20px;
    font-size: 17px;
    font-weight: 500;
    line-height: 25px;
    text-align: center;
}
.card {
    display: flex;
    align-items: center;
    justify-content: space-between;
    height: 75px;
    margin-bottom: 13px;
    padding: 0 21px 0 143px;
    border-radius: 5px;
    background: #2d2d2d;
    font-size: 17px;
    font-weight: 600;
}
.scroller {
    display: flex;
    flex-direction: column;
    align-items: center;
    width: 19px;
    padding: 10px 0;
    background: #4a4a4a;
    color: #999;
}
.scroller i {
    width: 15px;
    height: 132px;
    margin-top: 5px;
    background: #696969;
}
.scroller .up {
    transform: rotate(180deg);
}
.scroller .down {
    margin-top: auto;
}
.layers {
    flex: 1;
    display: flex;
    flex-direction: column;
    border-top: 2px solid #3a3a3a;
}
.layers .tabs {
    height: 37px;
}
.row {
    flex: none;
    display: flex;
    align-items: center;
    font-family: "DejaVu Sans Condensed", "Noto Sans", sans-serif;
    color: #ddd;
}
.row .field {
    width: 62px;
}
.filters {
    height: 40px;
    gap: 14px;
    padding: 2px 0 0 222px;
    border-bottom: 1px solid #424242;
}
.opacity {
    height: 35px;
    padding-left: 225px;
    border-bottom: 1px solid #424242;
}
.locks {
    height: 37px;
    gap: 12px;
    padding: 0 0 2px 8px;
}
.fill-label {
    margin-left: 16px;
}
.locks .field {
    margin-left: -6px;
}
.layer-list {
    flex: 1;
    background: linear-gradient(90deg, #4d4d4d calc(100% - 19px), #4a4a4a 0);
}
.layer {
    display: flex;
    height: 44px;
    margin-right: 19px;
    background: #535353;
    border-bottom: 1px solid #454545;
    font-family: "DejaVu Sans Condensed", "Noto Sans", sans-serif;
    font-size: 13px;
}
.layer.selected {
    height: 50px;
}
.vis {
    width: 38px;
    border-right: 1px solid #454545;
}
.layer-main {
    flex: 1;
    display: flex;
    align-items: center;
    gap: 10px;
    padding-left: 2px;
    color: #f0f0f0;
}
.selected .layer-main {
    background: #6a6a6a;
}
.thumb {
    width: 40px;
    height: 31px;
    margin: 0 3px 0 2px;
    border: 1px solid #2c2c2c;
    background: linear-gradient(#fff, #fff) center / 23px 18px no-repeat;
}
.lock {
    margin-left: auto;
    margin-right: 20px;
}
.layer-actions {
    flex: none;
    display: flex;
    align-items: center;
    justify-content: flex-end;
    height: 32px;
    padding: 0 25px 2px 0;
    border-top: 1px solid #3e3e3e;
    color: #9c9c9c;
}
.layer-actions button {
    width: 34px;
}
.layer-actions .fx {
    font-size: 16px;
    font-style: italic;
    line-height: 16px;
}

/* floating character panel */
.character {
    position: absolute;
    top: 115px;
    right: 516px;
    width: 270px;
    border: 1px solid #333;
    border-top-width: 5px;
    background: #535353;
    box-shadow: 0 0 8px rgba(0, 0, 0, .4);
}
.character .tabs button {
    padding: 0 8px 4px;
}
.character .tabs .on {
    padding: 0 10px 4px;
}
.character .panel-menu {
    padding-bottom: 1px;
}
.char-body {
    display: flex;
    flex-direction: column;
    gap: 4px;
    padding: 16px 5px 5px 6px;
}
.char-row {
    display: flex;
    align-items: center;
    gap: 3px;
    height: 21px;
}
.char-row:first-child {
    margin-bottom: 5px;
}
.char-row.last {
    height: 24px;
}
.end {
    margin-left: auto;
}
.char-row .swatch {
    width: 70px;
    height: 25px;
    margin: 0;
}
.color-label {
    padding-right: 6px;
    font-family: "DejaVu Sans Condensed", "Noto Sans", sans-serif;
    color: #ccc;
}
.w148 { width: 148px; }
.w144 { width: 144px; }
.w94 { width: 94px; }
.w92 { width: 92px; }
.w88 { width: 88px; }
.w84 { width: 84px; }
.w70 { width: 70px; }
.faces {
    display: grid;
    grid-template-columns: repeat(8, 30px);
    justify-content: center;
    height: 28px;
    margin-top: 3px;
    color: #dedede;
    font-family: "DejaVu Serif", serif;
    font-size: 17px;
    -webkit-text-stroke: .3px;
}
.faces button {
    height: 28px;
    white-space: nowrap;
}
.faces sup, .faces sub, .faces small {
    font-size: 10px;
}
.faces sup {
    margin-bottom: 8px;
}
.faces sub, .faces small {
    margin-top: 7px;
}
.faces .b { font-weight: bold; }
.faces .i { font-style: italic; }
.faces .u { text-decoration: underline; text-underline-offset: 4px; }
.faces .s { text-decoration: line-through; }
.faces .dim { color: #8c8c8c; }
.faces .over { text-decoration: overline; }
.opentype {
    height: 30px;
    margin-top: 3px;
    font-family: "Liberation Serif", serif;
    font-size: 22px;
}
.opentype sup {
    font-size: 14px;
}
.opentype .active {
    background: #363636;
    border-radius: 2px;
}

/* panel flyout menu */
.flyout {
    position: absolute;
    top: 131px;
    right: 239px;
    width: 279px;
    margin: 0;
    padding: 2px;
    list-style: none;
    background: #f0f0f0;
    border: 1px solid #a0a0a0;
    box-shadow: 2px 2px 3px rgba(0, 0, 0, .6);
    color: #000;
    font-size: 15px;
}
.flyout li {
    position: relative;
    display: flex;
    justify-content: space-between;
    height: 23px;
    padding: 0 20px 0 21px;
    line-height: 20px;
    white-space: nowrap;
}
.flyout kbd {
    font-family: inherit;
}
.flyout .line {
    height: 11px;
    background: linear-gradient(#b8b8b8, #b8b8b8) center / 100% 1px no-repeat;
}
.flyout .off {
    color: #6d6d6d;
}
.flyout .hover {
    background: #0078d7;
    color: #fff;
}
.flyout .more {
    line-height: 22px;
}
.flyout .checked::before {
    content: "";
    position: absolute;
    left: 6px;
    top: 5px;
    width: 5px;
    height: 9px;
    border: solid;
    border-width: 0 3px 3px 0;
    transform: rotate(40deg);
}
.flyout .more::after {
    content: "";
    position: absolute;
    right: 7px;
    top: 3px;
    border: 6px solid transparent;
    border-left-color: currentColor;
    border-right: 0;
}
.taskbar-edge {
    flex: none;
    height: 2px;
    background: linear-gradient(90deg, #222 460px, #555 0 660px, #222 0);
}
```
